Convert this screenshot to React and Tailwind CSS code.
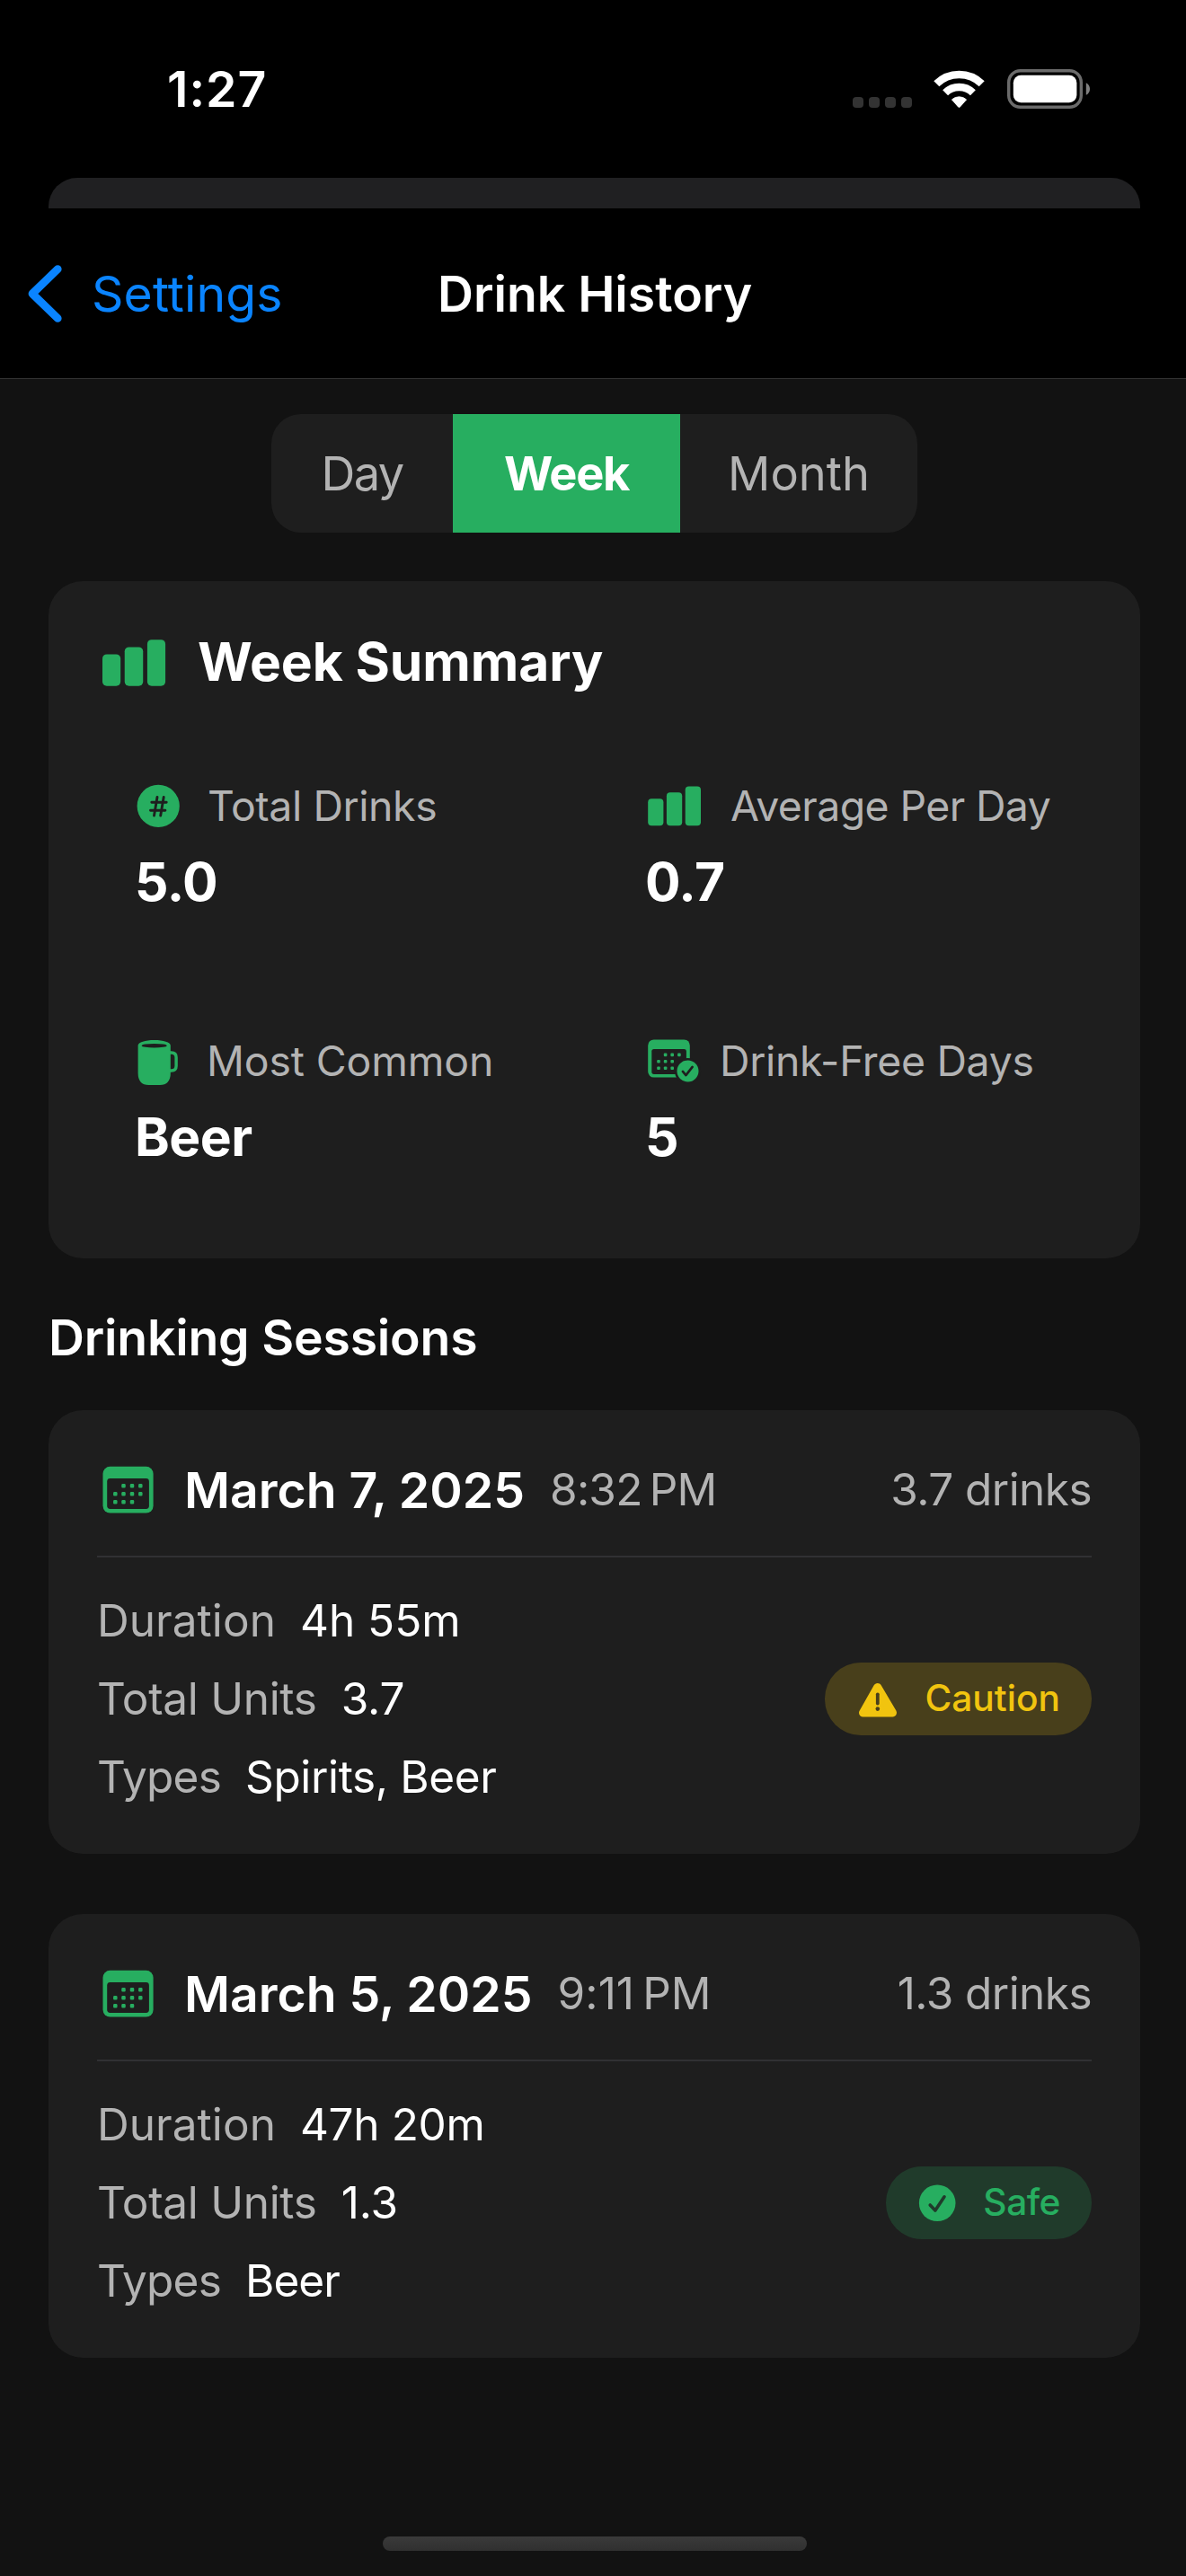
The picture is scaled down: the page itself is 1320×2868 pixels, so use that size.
import React from "react";

const GREEN = "#27AE60";
const CARD = "#1E1E1E";

function WifiIcon() {
  return (
    <svg className="h-[42px] w-[57px]" viewBox="0 0 57 42" fill="none">
      <path d="M3.3 15.3A36 36 0 0 1 53.7 15.3" stroke="#fff" strokeWidth="8.6" />
      <path d="M13.1 25.3A22 22 0 0 1 43.9 25.3" stroke="#fff" strokeWidth="8.4" />
      <path d="M20.4 32.9A12 12 0 0 1 36.6 32.9L29.3 41.2Q28.5 42 27.7 41.2Z" fill="#fff" stroke="#fff" strokeWidth="0.8" strokeLinejoin="round" />
    </svg>
  );
}

function BatteryIcon() {
  return (
    <svg className="h-[44px] w-[92px]" viewBox="0 0 92 44" fill="none">
      <rect x="1.7" y="1.7" width="80.6" height="40.6" rx="13" stroke="#6B6B6B" strokeWidth="3.4" />
      <rect x="6.8" y="6.8" width="70.6" height="30.4" rx="8.5" fill="#fff" />
      <path d="M87.8 15.2C90.4 16.4 92 19 92 22C92 25 90.4 27.6 87.8 28.8Z" fill="#808080" />
    </svg>
  );
}

function BarsIcon({ className }) {
  return (
    <svg className={className} viewBox="0 0 62 46" fill={GREEN}>
      <rect x="0" y="14.2" width="17.6" height="30.8" rx="4.2" />
      <rect x="21.6" y="7.2" width="17.9" height="37.8" rx="4.2" />
      <rect x="43.6" y="0" width="17.6" height="45" rx="4.2" />
    </svg>
  );
}

function AverageIcon() {
  return (
    <svg className="h-[60px] w-[95px] shrink-0" viewBox="0 0 95 60" fill={GREEN}>
      <rect x="3.2" y="22.2" width="17.2" height="30" rx="4" />
      <rect x="23.9" y="15.2" width="17.3" height="37" rx="4" />
      <rect x="44.7" y="8.5" width="17.3" height="43.7" rx="4" />
    </svg>
  );
}

function HashIcon() {
  return (
    <svg className="h-[60px] w-[81px] shrink-0" viewBox="0 0 81 60">
      <circle cx="26.2" cy="30.4" r="23.6" fill={GREEN} />
      <path d="M25 20.4L21.5 41M32.2 20.4L28.7 41M18.8 26.2H35.2M17.5 35.2H33.9" stroke={CARD} strokeWidth="2.9" strokeLinecap="round" />
    </svg>
  );
}

function MugIcon() {
  return (
    <svg className="h-[60px] w-[80px] shrink-0" viewBox="0 0 80 60" fill="none">
      <path d="M3.6 13C3.6 9.4 11.6 7 21.7 7S39.8 9.4 39.8 13V44C39.8 52.5 35.5 57 28 57H15.4C7.9 57 3.6 52.5 3.6 44Z" fill={GREEN} />
      <ellipse cx="21.7" cy="13.2" rx="14" ry="2.3" fill={CARD} />
      <path d="M39 21H40.8C44.4 21 46.1 23 46.1 26.2V35.8C46.1 39 44.4 41 40.8 41H39" stroke={GREEN} strokeWidth="3.4" />
    </svg>
  );
}

const SMALL_DOTS = [
  [22.6, 23.4], [30.2, 23.4], [37.9, 23.4],
  [15, 30.8], [22.6, 30.8], [30.2, 30.8],
  [15, 38.2], [22.6, 38.2], [30.2, 38.2],
];

function CalendarCheckIcon() {
  return (
    <svg className="h-[60px] w-[83px] shrink-0" viewBox="0 0 83 60">
      <rect x="3.2" y="6.4" width="46.6" height="42.2" rx="6.5" fill={GREEN} />
      <rect x="7.3" y="16.9" width="38.6" height="28" rx="2.6" fill={CARD} />
      {SMALL_DOTS.map(([x, y]) => (
        <rect key={`${x}-${y}`} x={x - 1.8} y={y - 1.8} width="3.6" height="3.6" rx="1" fill={GREEN} />
      ))}
      <circle cx="47.5" cy="41.5" r="14.6" fill={CARD} />
      <circle cx="47.5" cy="41.5" r="12" fill={GREEN} />
      <path d="M41.9 41.9L45.4 46.1L52.6 36.9" stroke={CARD} strokeWidth="2.6" fill="none" strokeLinecap="round" strokeLinejoin="round" />
    </svg>
  );
}

const DOTS = [
  [29.5, 25.2], [39, 25.2], [48.3, 25.2],
  [20.3, 34.2], [29.5, 34.2], [39, 34.2], [48.3, 34.2],
  [20.3, 43.2], [29.5, 43.2], [39, 43.2],
];

function CalendarIcon() {
  return (
    <svg className="h-[60px] w-[97px] shrink-0" viewBox="0 0 97 60">
      <rect x="6.5" y="3.8" width="56.1" height="51.8" rx="8" fill={GREEN} />
      <rect x="11.2" y="17" width="46.7" height="34" rx="3.4" fill={CARD} />
      {DOTS.map(([x, y]) => (
        <rect key={`${x}-${y}`} x={x - 2.2} y={y - 2.2} width="4.4" height="4.4" rx="1.2" fill={GREEN} />
      ))}
    </svg>
  );
}

function WarningIcon() {
  return (
    <svg className="h-[60px] w-[75px] shrink-0" viewBox="0 0 75 60">
      <path d="M22.7 16.6L39.4 44.9H6.6Z" fill="#F1C40F" stroke="#F1C40F" strokeWidth="9.2" strokeLinejoin="round" />
      <path d="M22.8 24.3V34.6" stroke="#483F1B" strokeWidth="3.8" strokeLinecap="round" />
      <circle cx="22.8" cy="40.6" r="2.3" fill="#483F1B" />
    </svg>
  );
}

function CheckIcon() {
  return (
    <svg className="h-[60px] w-[72px] shrink-0" viewBox="0 0 72 60" fill="none">
      <circle cx="21.2" cy="29.8" r="20.3" fill={GREEN} />
      <path d="M13.2 32L18.9 38L29 22.8" stroke="#203B2B" strokeWidth="3.6" strokeLinecap="round" strokeLinejoin="round" />
    </svg>
  );
}

function Stat({ icon, label, value, tracking }) {
  return (
    <div className="pt-[40px]">
      <div className="flex h-[60px] items-center text-[46.4px] text-[#B3B3B3]">
        {icon}
        <span className={tracking}>{label}</span>
      </div>
      <div className="mt-[15px] h-[80px] text-[58.7px] leading-[80px] font-bold tracking-[-0.5px] text-white">{value}</div>
    </div>
  );
}

function Field({ label, value, labelTracking, valueTracking }) {
  return (
    <div className="flex h-[87px] items-center gap-[27px] text-[49.5px]">
      <span className={`text-[#B3B3B3] ${labelTracking}`}>{label}</span>
      <span className={`text-white ${valueTracking}`}>{value}</span>
    </div>
  );
}

function SessionCard({ session }) {
  const safe = session.status === "Safe";
  return (
    <section className="h-[494px] w-full rounded-[38px] bg-[#1E1E1E] px-[54px]">
      <header className="flex h-[164px] items-center border-b-2 border-[#313133] pt-[15px]">
        <CalendarIcon />
        <h3 className="text-[55.3px] font-semibold text-white">{session.date}</h3>
        <span className={`ml-[28px] text-[49.5px] text-[#B3B3B3] ${session.timeTracking}`}>{session.time}</span>
        <span className="ml-auto text-[49.5px] tracking-[-0.55px] text-[#B3B3B3]">{session.drinks} drinks</span>
      </header>
      <div className="flex items-center justify-between pt-[27px]">
        <div>
          <Field label="Duration" value={session.duration} labelTracking="tracking-[0.05px]" valueTracking={session.durationTracking} />
          <Field label="Total Units" value={session.drinks} labelTracking="tracking-[-0.29px]" valueTracking="tracking-[-0.1px]" />
          <Field label="Types" value={session.types} labelTracking="tracking-[-0.79px]" valueTracking={session.typesTracking} />
        </div>
        <div
          className={`flex h-[81px] items-center rounded-[40px] pr-[35px] pl-[36px] text-[40.7px] font-medium ${
            safe ? "bg-[#203B2B] tracking-[-0.5px] text-[#27AE60]" : "bg-[#483F1B] text-[#F1C40F]"
          }`}
        >
          {safe ? <CheckIcon /> : <WarningIcon />}
          <span>{session.status}</span>
        </div>
      </div>
    </section>
  );
}

const SESSIONS = [
  {
    date: "March 7, 2025", time: "8:32\u202fPM", timeTracking: "tracking-[-0.79px]", drinks: "3.7",
    duration: "4h 55m", durationTracking: "tracking-normal", types: "Spirits, Beer", typesTracking: "tracking-[-0.37px]", status: "Caution",
  },
  {
    date: "March 5, 2025", time: "9:11\u202fPM", timeTracking: "tracking-[0.08px]", drinks: "1.3",
    duration: "47h 20m", durationTracking: "tracking-[-0.35px]", types: "Beer", typesTracking: "tracking-[-1px]", status: "Safe",
  },
];

export default function App() {
  return (
    <div className="flex h-[2868px] w-[1320px] flex-col overflow-hidden bg-[#121212] font-['Inter',sans-serif] leading-none whitespace-nowrap">
      <div className="bg-black">
        <div className="flex h-[198px] items-center pr-[107px] pl-[186px]">
          <span className="text-[55.3px] font-semibold tracking-[1px] text-white">1:27</span>
          <div className="ml-auto flex items-center">
            <div className="mt-[29px] flex gap-[6px]">
              <span className="h-[12px] w-[12px] rounded-[4px] bg-[#333333]" />
              <span className="h-[12px] w-[12px] rounded-[4px] bg-[#333333]" />
              <span className="h-[12px] w-[12px] rounded-[4px] bg-[#333333]" />
              <span className="h-[12px] w-[12px] rounded-[4px] bg-[#333333]" />
            </div>
            <div className="ml-[24px] flex items-center gap-[25px]">
              <WifiIcon />
              <BatteryIcon />
            </div>
          </div>
        </div>
        <div className="ml-[54px] h-[34px] w-[1215px] rounded-t-[32px] bg-[#202022]" />
        <nav className="flex h-[190px] items-center border-b border-[#333333]">
          <div className="flex w-[487px] items-center text-[#0A84FF]">
            <svg className="ml-[30px] h-[66px] w-[72px]" viewBox="0 0 72 66" fill="none">
              <path d="M34.2 5.6L6 33L34.2 60.4" stroke="#0A84FF" strokeWidth="8.8" strokeLinecap="round" strokeLinejoin="round" />
            </svg>
            <span className="text-[55.3px] tracking-[0.1px]">Settings</span>
          </div>
          <h1 className="text-[55.3px] font-semibold text-white">Drink History</h1>
        </nav>
      </div>

      <main className="ml-[54px] flex w-[1215px] flex-col items-center pt-[39px]">
        <div className="flex h-[132px] overflow-hidden rounded-[33px] bg-[#1E1E1E] text-[52.4px]">
          <div className="flex w-[202px] items-center justify-center tracking-[-1.6px] text-[#B3B3B3]">Day</div>
          <div className="flex w-[253px] items-center justify-center bg-[#27AE60] font-bold tracking-[-1.4px] text-white">Week</div>
          <div className="flex w-[264px] items-center justify-center text-[#B3B3B3]">Month</div>
        </div>

        <section className="mt-[54px] h-[754px] w-full rounded-[38px] bg-[#1E1E1E]">
          <header className="flex h-[180px] items-center pl-[60px]">
            <BarsIcon className="mt-[2px] h-[53px] w-[71px]" />
            <h2 className="ml-[35px] text-[58.7px] font-bold tracking-[-0.08px] text-white">Week Summary</h2>
          </header>
          <div className="grid auto-rows-[284px] grid-cols-[568px_1fr] pl-[96px]">
            <Stat icon={<HashIcon />} label="Total Drinks" value="5.0" tracking="tracking-[-0.41px]" />
            <Stat icon={<AverageIcon />} label="Average Per Day" value="0.7" tracking="tracking-[-0.59px]" />
            <Stat icon={<MugIcon />} label="Most Common" value="Beer" tracking="tracking-[-0.13px]" />
            <Stat icon={<CalendarCheckIcon />} label="Drink-Free Days" value="5" tracking="tracking-[-0.31px]" />
          </div>
        </section>

        <h2 className="flex h-[169px] w-full items-center pt-[6px] text-[55.3px] font-semibold tracking-[-0.2px] text-white">
          Drinking Sessions
        </h2>

        <div className="flex w-full flex-col gap-[67px]">
          {SESSIONS.map((session) => (
            <SessionCard key={session.date} session={session} />
          ))}
        </div>
      </main>

      <div className="mt-auto mb-[28px] ml-[426px] h-[16px] w-[472px] rounded-full bg-linear-to-b from-[#3A3A3A] to-[#303030]" />
    </div>
  );
}
